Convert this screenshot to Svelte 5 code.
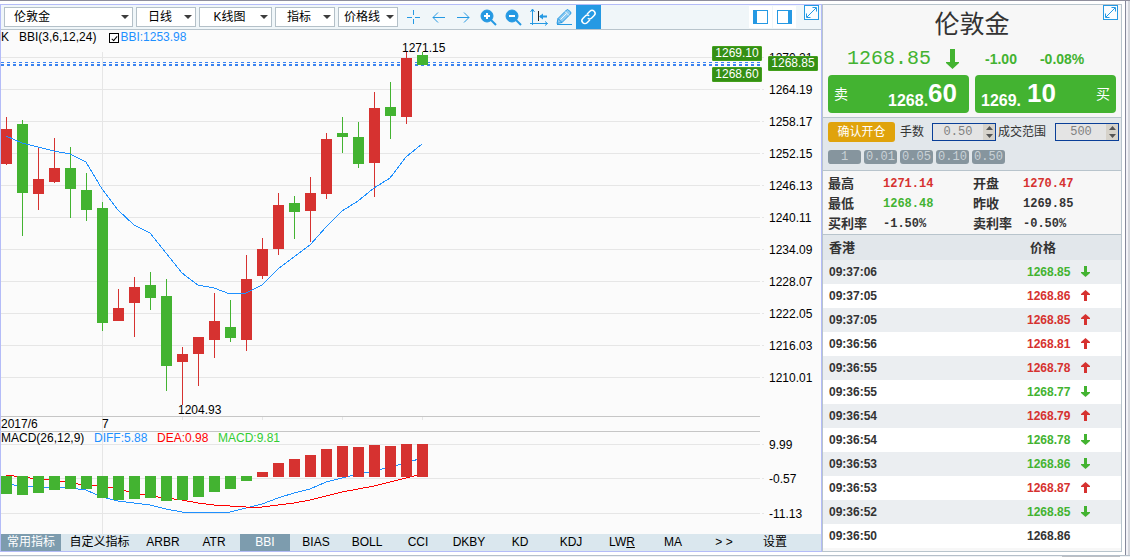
<script lang="ts">
  type Dir = 'up' | 'down' | '';

  // top, bottom, high, low in chart units, and whether the bar rose
  const candles: [number, number, number, number, boolean][] = [
    [129, 164, 117, 165, true],
    [124, 193, 120, 236, false],
    [179, 194, 148, 210, true],
    [168, 182, 138, 183, true],
    [168, 189, 147, 218, false],
    [190, 210, 173, 221, false],
    [208, 323, 202, 331, false],
    [308, 321, 289, 321, true],
    [287, 303, 277, 337, true],
    [285, 298, 272, 310, false],
    [296, 366, 279, 391, false],
    [354, 362, 347, 405, true],
    [337, 354, 337, 386, true],
    [321, 340, 293, 358, true],
    [327, 338, 300, 342, false],
    [279, 340, 255, 351, true],
    [249, 276, 238, 279, true],
    [205, 249, 193, 255, true],
    [203, 212, 196, 239, false],
    [193, 211, 177, 242, true],
    [139, 194, 133, 199, true],
    [133, 137, 117, 153, false],
    [137, 164, 122, 168, false],
    [108, 163, 92, 197, true],
    [107, 116, 82, 139, false],
    [58, 117, 52, 124, true],
    [55, 65, 52, 65, false],
  ];
  const bbi = [136, 143, 147, 151, 154, 162, 189, 210, 225, 233, 253, 273, 285, 288, 294, 293, 285, 269, 257, 245, 227, 211, 201, 188, 178, 157, 144];
  const macd = [494, 495, 493, 490, 489, 489, 498, 500, 499, 498, 501, 500, 497, 492, 489, 481, 472, 463, 459, 455, 449, 446, 447, 445, 446, 444, 444];
  const diff = [484, 486, 487, 487, 488, 490, 497, 501, 503, 505, 509, 512, 512, 512, 512, 508, 504, 498, 493, 489, 482, 478, 474, 471, 467, 463, 458];
  const dea = [475, 477, 479, 480, 483, 485, 486, 489, 493, 496, 498, 500, 503, 505, 506, 507, 507, 505, 503, 500, 496, 492, 489, 486, 482, 478, 474];

  const x = (i: number) => 6 + i * 16;
  const line = (ys: number[]) => ys.map((y, i) => `${x(i)},${y}`).join(' ');

  const prices = ['1270.21', '1264.19', '1258.17', '1252.15', '1246.13', '1240.11', '1234.09', '1228.07', '1222.05', '1216.03', '1210.01'];
  const scale = [
    ...prices.map((text, i) => ({ text, y: 57 + i * 32 })),
    { text: '9.99', y: 444 },
    { text: '-0.57', y: 478 },
    { text: '-11.13', y: 513 },
  ];

  const tabs = ['ARBR', 'ATR', 'BBI', 'BIAS', 'BOLL', 'CCI', 'DKBY', 'KD', 'KDJ', 'LWR', 'MA', '> >', '设置'];
  let activeTab = $state('BBI');

  const menus = [
    { name: '周期', value: '日线', size: 'small' },
    { name: '图形', value: 'K线图', size: 'medium' },
    { name: '指标', value: '指标', size: 'small' },
    { name: '线型', value: '价格线', size: 'small' },
  ];

  const stats = [
    ['最高', '1271.14', 'up', '开盘', '1270.47', 'up'],
    ['最低', '1268.48', 'down', '昨收', '1269.85', ''],
    ['买利率', '-1.50%', '', '卖利率', '-0.50%', ''],
  ];

  const ticks: [string, string, Dir][] = [
    ['09:37:06', '1268.85', 'down'],
    ['09:37:05', '1268.86', 'up'],
    ['09:37:05', '1268.85', 'up'],
    ['09:36:56', '1268.81', 'up'],
    ['09:36:55', '1268.78', 'up'],
    ['09:36:55', '1268.77', 'down'],
    ['09:36:54', '1268.79', 'up'],
    ['09:36:54', '1268.78', 'down'],
    ['09:36:53', '1268.86', 'down'],
    ['09:36:53', '1268.87', 'up'],
    ['09:36:52', '1268.85', 'down'],
    ['09:36:50', '1268.86', ''],
  ];

  let lots = $state('0.50');
  let range = $state('500');
  let showBbi = $state(true);

  function stepLots(by: number) {
    lots = Math.max(0, Number(lots) + by).toFixed(2);
  }

  function stepRange(by: number) {
    range = String(Math.max(0, Number(range) + by));
  }
</script>

{#snippet expandIcon()}
  <svg width="15" height="15" viewBox="0 0 15 15" fill="none" stroke="#2599e3">
    <rect x=".5" y=".5" width="14" height="14" fill="#fbfdff" />
    <path d="M3 12L12 3M8.5 2.5h4v4M6.5 12.5h-4v-4" />
  </svg>
{/snippet}

{#snippet spinner(name: string, step: (by: number) => void, by: number)}
  <span class="spin">
    <button aria-label="{name} +" onclick={() => step(by)}>
      <svg width="7" height="4"><path d="M0 4L3.5 0L7 4z" fill="#555" /></svg>
    </button>
    <button aria-label="{name} -" onclick={() => step(-by)}>
      <svg width="7" height="4"><path d="M0 0L3.5 4L7 0z" fill="#555" /></svg>
    </button>
  </span>
{/snippet}

<div class="window">
  <main class="workspace">
    <section class="chart-panel">
      <div class="toolbar">
        <label class="menu large">
          <select aria-label="品种"><option>伦敦金</option></select>
        </label>
        {#each menus as menu}
          <label class="menu {menu.size}">
            <select aria-label={menu.name}><option>{menu.value}</option></select>
          </label>
        {/each}
        <div class="tools">
          <button aria-label="十字光标">
            <svg viewBox="0 0 25 24"><path d="M12.5 5v5M12.5 14v5M6 12.5h5M14 12.5h5" /></svg>
          </button>
          <button aria-label="左移">
            <svg viewBox="0 0 25 24"><path d="M7 12.5h12M12 7.5l-5 5 5 5" /></svg>
          </button>
          <button aria-label="右移">
            <svg viewBox="0 0 25 24"><path d="M6 12.5h12M13 7.5l5 5-5 5" /></svg>
          </button>
          <button aria-label="放大">
            <svg viewBox="0 0 25 24">
              <circle cx="11" cy="11" r="6" fill="#2599e3" />
              <path d="M15 15l5 5" stroke-width="2" />
              <path d="M8 11h6M11 8v6" stroke="#fff" stroke-width="2" />
            </svg>
          </button>
          <button aria-label="缩小">
            <svg viewBox="0 0 25 24">
              <circle cx="11" cy="11" r="6" fill="#2599e3" />
              <path d="M15 15l5 5" stroke-width="2" />
              <path d="M8 11h6" stroke="#fff" stroke-width="2" />
            </svg>
          </button>
          <button aria-label="坐标">
            <svg viewBox="0 0 25 24">
              <path d="M6.5 4v14.5h15M4.5 7l2-3 2 3M19 16.5l2.5 2-2.5 2M4 18.5h2M6.5 18v2" />
              <path d="M12.5 6v10" stroke="#222" />
              <path d="M14 11.5h7" stroke-width="2" />
              <path d="M13 11.5l4-3v6z" fill="#2599e3" stroke="none" />
            </svg>
          </button>
          <button aria-label="画线">
            <svg viewBox="0 0 25 24">
              <path d="M6 18.5l1-5 8.5-8.5q1-1 2 0l2 2q1 1 0 2l-8.5 8.5zM7 13.5l4 4" fill="#8ccaf2" />
              <path d="M14 6.5l4 4M9.500 14.5l6-6" stroke="#f0f6f9" />
              <path d="M6 19.5h15" />
            </svg>
          </button>
          <button class="active" aria-label="联动">
            <svg viewBox="0 0 25 24" stroke-linecap="round">
              <g fill="none" stroke="#fff" stroke-width="1.5" transform="rotate(-45 12.5 12)">
                <path d="M11 15H7.5a3 3 0 0 1 0-6H11a3 3 0 0 1 2.8 2" />
                <path d="M14 9h3.5a3 3 0 0 1 0 6H14a3 3 0 0 1-2.8-2" />
              </g>
            </svg>
          </button>
        </div>
        <div class="layouts">
          <button aria-label="左栏">
            <svg width="15" height="14"><rect x=".5" y=".5" width="14" height="13" fill="#fff" stroke="#2599e3" /><path d="M0 0h4v14H0z" fill="#2599e3" /></svg>
          </button>
          <button aria-label="右栏">
            <svg width="15" height="14"><rect x=".5" y=".5" width="14" height="13" fill="#fff" stroke="#2599e3" /><path d="M11 0h4v14h-4z" fill="#2599e3" /></svg>
          </button>
        </div>
        <button class="expand" aria-label="展开图表">{@render expandIcon()}</button>
      </div>

      <div class="legend">
        <span>K</span>
        <span>BBI(3,6,12,24)</span>
        <label><input type="checkbox" bind:checked={showBbi} />BBI:1253.98</label>
      </div>

      <div class="chart">
        <svg class="plot" height="489">
          <g transform="translate(-1 -45)">
            <g class="grid">
              {#each scale as mark}
                <line x1="1" x2="100%" y1={mark.y + 0.5} y2={mark.y + 0.5} />
              {/each}
              <path d="M102.5 52V534M182.5 417v3M262.5 417v3M342.5 417v3M422.5 417v3" />
            </g>
            <g class="divider">
              <line x1="1" x2="100%" y1="416.5" y2="416.5" />
              <line x1="1" x2="100%" y1="431.5" y2="431.5" />
            </g>
            <g class="quote">
              <line x1="1" x2="100%" y1="62.5" y2="62.5" />
              <line x1="1" x2="100%" y1="65" y2="65" stroke-width="2" />
            </g>

            {#each candles as [top, bottom, high, low, rise], i}
              <g class={rise ? 'rise' : 'fall'}>
                <rect x={x(i)} y={high} width="1" height={low - high} />
                <rect x={x(i) - 5} y={top} width="11" height={bottom - top} />
              </g>
            {/each}
            {#if showBbi}
              <polyline points={line(bbi)} stroke="#1e90ff" />
            {/if}

            <polyline points={line(diff)} stroke="#1e90ff" />
            <polyline points={line(dea)} stroke="#f00" />
            {#each macd as y, i}
              {#if y > 476}
                <rect class="fall" x={x(i) - 5} y="476" width="11" height={y - 476} />
              {:else}
                <rect class="rise" x={x(i) - 5} {y} width="11" height={477 - y} />
              {/if}
            {/each}

            <text x="402" y="52">1271.15</text>
            <text x="178" y="414">1204.93</text>
            <text x="1" y="428">2017/6</text>
            <text x="102" y="428">7</text>
            <text x="1" y="442">MACD(26,12,9)</text>
            <text x="94" y="442" fill="#1e90ff">DIFF:5.88</text>
            <text x="157" y="442" fill="#f00">DEA:0.98</text>
            <text x="218" y="442" fill="#32cd32">MACD:9.81</text>
          </g>
        </svg>
        <svg class="axis" width="60" height="489">
          <g transform="translate(0 -45)">
            {#each scale as mark}
              <path class="grid" d="M1 {mark.y + 0.5}h2" />
              <text x="8" y={mark.y + 5}>{mark.text}</text>
            {/each}
          </g>
        </svg>
        <span class="tag ask">1269.10</span>
        <span class="tag last">1268.85</span>
        <span class="tag bid">1268.60</span>
      </div>

      <nav class="tabs">
        <button class="common active">常用指标</button>
        <button class="custom">自定义指标</button>
        {#each tabs as tab}
          <button class:active={activeTab === tab} onclick={() => (activeTab = tab)}>
            {#if tab === 'LWR'}LW<u>R</u>{:else}{tab}{/if}
          </button>
        {/each}
      </nav>
    </section>

    <aside class="quote-panel">
      <header>
        <button class="expand corner" aria-label="展开报价">{@render expandIcon()}</button>
        <h1>伦敦金</h1>
        <div class="now">
          <span class="price">1268.85</span>
          <svg width="13" height="20"><path d="M4 0h5v13h4v1l-6.5 6L0 14v-1h4z" fill="#43b331" /></svg>
          <span class="change">-1.00</span>
          <span class="percent">-0.08%</span>
        </div>
        <div class="deal">
          <button class="sell"><span>卖</span><small>1268.</small><strong>60</strong></button>
          <button class="buy"><small>1269.</small><strong>10</strong><span>买</span></button>
        </div>
      </header>

      <div class="order">
        <div class="fields">
          <button class="confirm">确认开仓</button>
          <label for="lots">手数</label>
          <div class="number">
            <input id="lots" type="text" bind:value={lots} />
            {@render spinner('手数', stepLots, 0.01)}
          </div>
          <label for="range">成交范围</label>
          <div class="number last-field">
            <input id="range" type="text" bind:value={range} />
            {@render spinner('成交范围', stepRange, 1)}
          </div>
        </div>
        <div class="presets">
          {#each ['1', '0.01', '0.05', '0.10', '0.50'] as preset}
            <button onclick={() => (lots = Number(preset).toFixed(2))}>{preset}</button>
          {/each}
        </div>
      </div>

      <table class="stats">
        <tbody>
          {#each stats as [name, value, dir, name2, value2, dir2]}
            <tr>
              <th scope="row">{name}</th>
              <td class="first {dir}">{value}</td>
              <th class="second" scope="row">{name2}</th>
              <td class={dir2}>{value2}</td>
            </tr>
          {/each}
        </tbody>
      </table>

      <table class="ticks">
        <thead>
          <tr><th class="time">香港</th><th class="deal-price">价格</th></tr>
        </thead>
        <tbody>
          {#each ticks as [time, price, dir]}
            <tr>
              <td class="time">{time}</td>
              <td class={dir}>
                {price}
                {#if dir}
                  <svg width="9" height="11" viewBox="0 0 9 11">
                    <path d={dir === 'up' ? 'M3 11V5H0V4l4.5-4L9 4v1H6v6z' : 'M3 0v6H0v1l4.5 4L9 7V6H6V0z'} fill="currentColor" />
                  </svg>
                {/if}
              </td>
            </tr>
          {/each}
        </tbody>
      </table>
    </aside>
  </main>
  <div class="edge"></div>
</div>
<div class="bottom"><div class="thumb"></div></div>

<style>
  :global(body) {
    margin: 0;
    background: #fff;
    overflow: hidden;
  }

  .window,
  .bottom {
    font: 12px/16px 'Liberation Sans', 'Noto Sans CJK SC', sans-serif;
    color: #000;
  }

  .window {
    display: flex;
    border-top: 1px solid #8f8f9d;
  }

  .workspace {
    flex: 1;
    min-width: 0;
    display: flex;
    padding: 3px 3px 3px 0;
  }

  .edge {
    width: 2px;
    border-left: 1px solid #85889a;
    border-right: 2px solid #d4d6dc;
    background: #f2f2f7;
  }

  .bottom {
    height: 1px;
    padding-right: 10px;
    border-top: 1px solid #b5bfc9;
    background: #eef1f4;
  }

  .thumb {
    width: 58px;
    height: 1px;
    margin-left: auto;
    background: #bcbfc4;
  }

  button,
  input,
  select {
    margin: 0;
    padding: 0;
    border: 0;
    border-radius: 0;
    font: inherit;
    color: inherit;
    background: none;
  }

  button svg {
    display: block;
  }

  .chart-panel {
    flex: 1;
    min-width: 0;
    border: 1px solid #b4bcf8;
    background: #fbfbfb;
  }

  .toolbar {
    display: flex;
    align-items: center;
    height: 24px;
    padding-left: 3px;
    border-bottom: 1px solid #b8c4cc;
    background: #f0f6f9;
  }

  .menu {
    position: relative;
    height: 20px;
    margin-right: 3px;
  }

  .menu select {
    appearance: none;
    display: block;
    box-sizing: border-box;
    width: 100%;
    height: 20px;
    padding: 0 12px 0 0;
    border: 1px solid #b4c0c8;
    background: #fff;
    text-align: center;
    text-align-last: center;
  }

  .menu::after {
    content: '';
    position: absolute;
    right: 4px;
    top: 8px;
    border: 4px solid transparent;
    border-top-color: #3c3c3c;
    border-bottom: 0;
    pointer-events: none;
  }

  .menu.small {
    width: 60px;
  }

  .menu.medium {
    width: 73px;
  }

  .menu.large {
    width: 129px;
  }

  .menu.large select {
    padding-left: 9px;
    text-align-last: left;
  }

  .tools {
    display: flex;
  }

  .tools svg {
    width: 25px;
    height: 24px;
    fill: none;
    stroke: #2599e3;
  }

  .tools .active {
    background: #2599e3;
  }

  .layouts {
    display: flex;
    gap: 1px;
    margin-left: auto;
    margin-right: 8px;
  }

  .layouts button {
    padding: 4px;
    background: #fff;
  }

  .expand {
    align-self: flex-start;
    margin-right: 2px;
  }

  .legend {
    display: flex;
    gap: 10px;
    height: 15px;
    line-height: 15px;
  }

  .legend label {
    display: flex;
    align-items: center;
    gap: 1px;
    margin-left: 3px;
    color: #1e90ff;
  }

  .legend input {
    appearance: none;
    display: grid;
    place-items: center;
    width: 10px;
    height: 10px;
    box-sizing: border-box;
    border: 1px solid #000;
    background: #fff;
  }

  .legend input:checked::after {
    content: '';
    width: 2px;
    height: 5px;
    border: solid #000;
    border-width: 0 1px 1px 0;
    rotate: 40deg;
  }

  .chart {
    position: relative;
    display: flex;
    height: 489px;
  }

  .plot {
    flex: 1;
    min-width: 0;
    overflow: visible;
  }

  .grid,
  .divider,
  .quote {
    fill: none;
    stroke: #e6e6e6;
  }

  .divider {
    stroke: #c6c6c6;
  }

  .quote {
    stroke: #3b83f0;
    stroke-dasharray: 3 3;
  }

  polyline {
    fill: none;
    shape-rendering: crispEdges;
  }

  .rise {
    fill: #d63230;
  }

  .fall {
    fill: #43b331;
  }

  .tag {
    position: absolute;
    box-sizing: border-box;
    width: 50px;
    border: 1px solid #43a01c;
    border-radius: 1px;
    background: #348f14;
    color: #fff;
    line-height: 13px;
    text-align: center;
  }

  .ask {
    top: 1px;
    right: 59px;
  }

  .last {
    top: 11px;
    right: 3px;
  }

  .bid {
    top: 22px;
    right: 59px;
  }

  .tabs {
    display: flex;
    gap: 1px;
    height: 17px;
    background: #dae7ee;
  }

  .tabs button {
    width: 50px;
    line-height: 17px;
    white-space: nowrap;
  }

  .tabs .common {
    width: 60px;
  }

  .tabs .custom {
    width: 75px;
  }

  .tabs .active {
    background: #7d9cae;
    color: #fff;
  }

  .quote-panel {
    width: 298px;
    flex: none;
    border: 1px solid #b8c4cc;
    background: #f7f7f7;
    color: #333;
  }

  header {
    position: relative;
    padding: 0 5px 4px;
    border-bottom: 1px solid #b8c4cc;
  }

  .corner {
    position: absolute;
    top: 0;
    right: 1px;
  }

  h1 {
    margin: 0;
    font-size: 25px;
    line-height: 38px;
    font-weight: 400;
    text-align: center;
  }

  .now {
    display: flex;
    align-items: center;
    height: 32px;
    padding-left: 19px;
    color: #43b331;
  }

  .price {
    margin-right: 15px;
    font-family: 'Liberation Mono', monospace;
    font-size: 20px;
  }

  .change,
  .percent {
    margin-left: 26px;
    font-size: 14px;
    font-weight: 700;
  }

  .percent {
    margin-left: 23px;
  }

  .deal {
    display: flex;
    gap: 6px;
  }

  .deal button {
    flex: 1;
    display: flex;
    align-items: baseline;
    height: 38px;
    padding: 0 6px;
    border-radius: 4px;
    background: #43b331;
    color: #fff;
    line-height: 38px;
  }

  .deal span {
    font-size: 14px;
    align-self: center;
  }

  .deal small {
    font-size: 16px;
    font-weight: 700;
    line-height: 52px;
  }

  .deal strong {
    align-self: flex-start;
    font-size: 26px;
    line-height: 37px;
  }

  .sell small {
    margin-left: auto;
  }

  .sell strong {
    margin-right: 6px;
  }

  .buy strong {
    margin-left: 6px;
  }

  .buy span {
    margin-left: auto;
  }

  .order {
    padding: 4px 2px 6px 5px;
    border-bottom: 1px solid #b8c4cc;
    background: #e2e7eb;
  }

  .fields {
    display: flex;
    align-items: center;
    height: 20px;
  }

  .confirm {
    width: 67px;
    height: 20px;
    margin-right: 5px;
    border-radius: 3px;
    background: #e0a30c;
    color: #fff;
  }

  .number {
    display: flex;
    box-sizing: border-box;
    width: 64px;
    height: 18px;
    margin: 0 2px 0 8px;
    border: 1px solid #0a3f98;
  }

  .number input {
    flex: 1;
    min-width: 0;
    background: #e4e4e4;
    color: #808080;
    font-family: 'Liberation Mono', monospace;
    text-align: center;
  }

  .last-field {
    margin-right: 0;
    margin-left: auto;
  }

  .spin {
    display: grid;
    width: 12px;
    background: #d6d2ca;
  }

  .spin button {
    display: grid;
    place-items: center;
  }

  .presets {
    display: flex;
    gap: 3px;
    margin-top: 8px;
  }

  .presets button {
    width: 33px;
    height: 14px;
    border-radius: 3px;
    background: #86959e;
    color: #c9d1d6;
    font: 12px/14px 'Liberation Mono', monospace;
  }

  table {
    width: 100%;
    border-collapse: collapse;
    table-layout: fixed;
  }

  th,
  td {
    padding: 0;
    text-align: left;
    white-space: nowrap;
    font-weight: 700;
  }

  th {
    font-size: 13px;
  }

  .up {
    color: #d63230;
  }

  .down {
    color: #43b331;
  }

  .stats {
    border-collapse: separate;
    border-spacing: 0;
    padding: 3px 0 0 5px;
    border-bottom: 1px solid #b8c4cc;
  }

  .stats th,
  .stats td {
    height: 20px;
    line-height: 20px;
  }

  .stats th {
    width: 55px;
  }

  .stats .first {
    width: 90px;
  }

  .stats .second {
    width: 50px;
  }

  .stats td {
    font-family: 'Liberation Mono', monospace;
  }

  .ticks th {
    height: 25px;
    background: #e2e7eb;
  }

  .ticks td {
    height: 24px;
    line-height: 16px;
  }

  .ticks .time {
    width: 198px;
    padding-left: 6px;
  }

  .ticks .deal-price {
    padding-left: 3px;
  }

  .ticks td svg {
    margin-left: 7px;
    vertical-align: -1px;
  }

  .ticks tbody tr {
    background: #fff;
  }

  .ticks tbody tr:nth-child(odd) {
    background: #ebeef1;
  }
</style>
